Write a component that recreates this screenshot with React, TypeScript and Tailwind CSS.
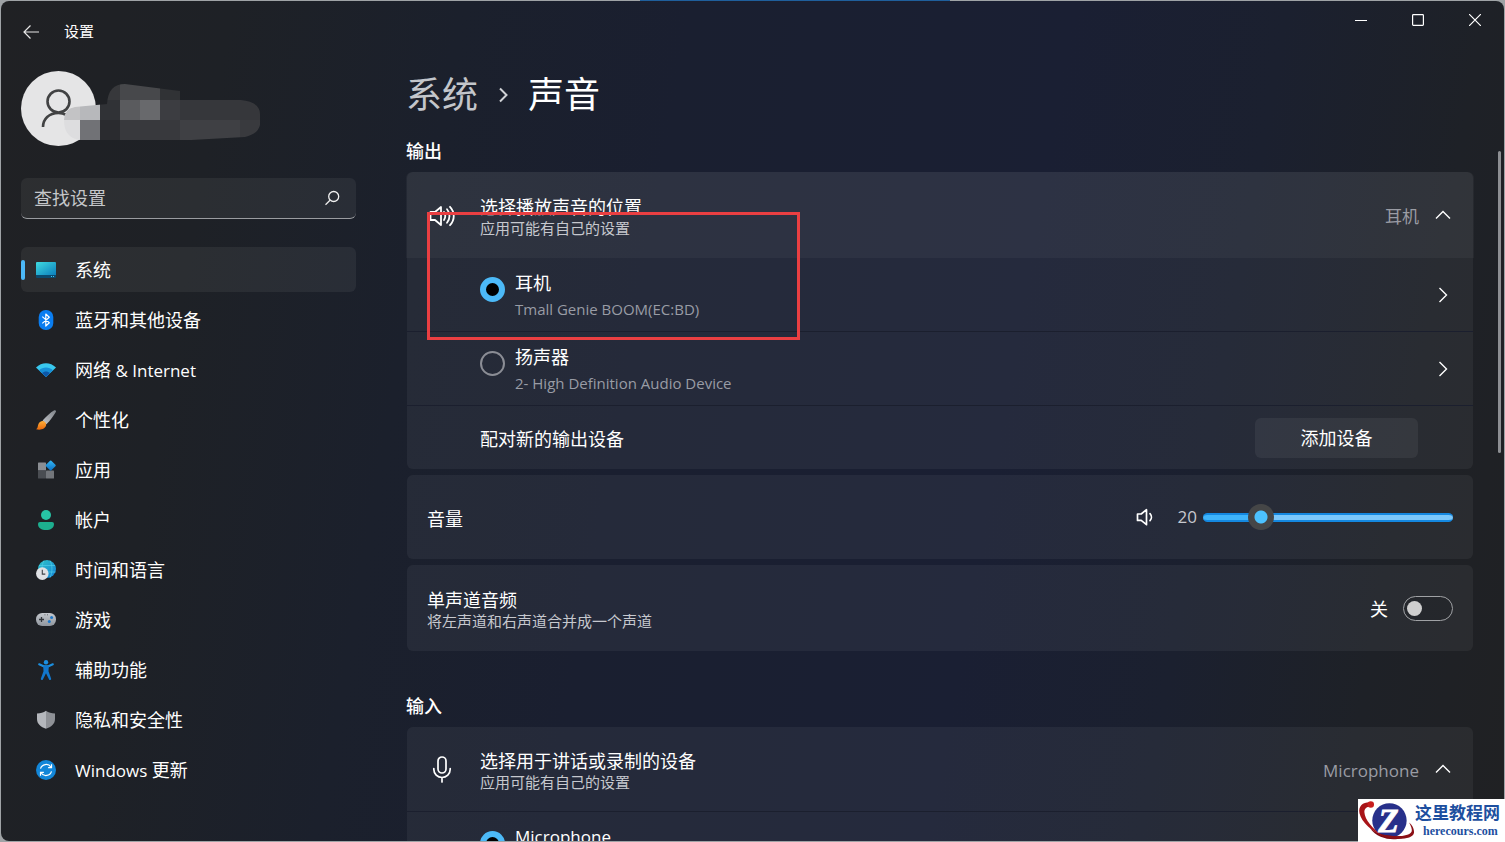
import { useState, type ReactNode } from 'react';

function SystemIcon() {
  return (
    <svg viewBox="0 0 20 20" className="size-5" aria-hidden="true">
      <defs>
        <linearGradient id="sys" x1="0" y1="0" x2="1" y2="1">
          <stop offset="0" stopColor="#3fdbe0" />
          <stop offset="1" stopColor="#0c7fbd" />
        </linearGradient>
      </defs>
      <path d="M1 2h18a1 1 0 0 1 1 1v12H0V3a1 1 0 0 1 1-1z" fill="url(#sys)" />
      <path d="M0 15h20v2a1 1 0 0 1-1 1H1a1 1 0 0 1-1-1z" fill="#0b4a6e" />
      <path d="M15 16.5h1M17 16.5h1" stroke="#43c6f2" strokeWidth="1" />
    </svg>
  );
}

function BluetoothIcon() {
  return (
    <svg viewBox="0 0 20 20" className="size-5" aria-hidden="true">
      <rect x="2.7" y="0" width="14.6" height="20" rx="7" fill="#0a7df0" />
      <path d="M6.3 6.6l7 6.2-3.5 3.2V4l3.5 3.2-7 6.2" fill="none" stroke="#fff" strokeWidth="1.2" strokeLinejoin="round" />
    </svg>
  );
}

function WifiIcon() {
  return (
    <svg viewBox="0 0 20 20" className="size-5" aria-hidden="true">
      <path d="M0 7.6C5.6 1.9 14.4 1.9 20 7.6L10 17z" fill="#39c8ee" />
      <path d="M3 10.3C7 6.6 13 6.6 17 10.3L10 17z" fill="#1790d8" />
      <path d="M6 13c2.3-2.1 5.7-2.1 8 0l-4 4z" fill="#0d57a8" />
    </svg>
  );
}

function BrushIcon() {
  return (
    <svg viewBox="0 0 20 20" className="size-5" aria-hidden="true">
      <defs>
        <linearGradient id="brh" x1="1" y1="0" x2="0" y2="1">
          <stop offset="0" stopColor="#7d8288" />
          <stop offset="1" stopColor="#c4c6ca" />
        </linearGradient>
        <linearGradient id="brt" x1="0" y1="0" x2="0" y2="1">
          <stop offset="0" stopColor="#ffb03a" />
          <stop offset="1" stopColor="#e8680c" />
        </linearGradient>
      </defs>
      <path d="M18.3.3c1.2-.6 2.2.5 1.5 1.7C17.6 6 14 10.800 10.400 14.200L6.600 10.600C9.800 6.800 14.200 2.700 18.300.3z" fill="url(#brh)" />
      <path d="M6.200 11c2.400-.2 4.400 2 3.900 4.300C9.400 18.600 5 20.600 0 19.200c1.800-.9 1.600-2.400 2.100-4.300C2.700 12.700 4.200 11.200 6.200 11z" fill="url(#brt)" />
    </svg>
  );
}

function AppsIcon() {
  return (
    <svg viewBox="0 0 20 20" className="size-5" aria-hidden="true">
      <defs>
        <linearGradient id="apd" x1="0" y1="0" x2="1" y2="1">
          <stop offset="0" stopColor="#35b8f5" />
          <stop offset="1" stopColor="#0a6fc2" />
        </linearGradient>
      </defs>
      <rect x="2" y="2.500" width="8" height="8.100" rx=".6" fill="#8b8e93" />
      <rect x="2" y="10.600" width="8" height="8" rx=".6" fill="#4a4d52" />
      <rect x="10" y="10.600" width="8" height="8" rx=".6" fill="#73767b" />
      <rect x="10.900" y="1.700" width="7.600" height="7.600" rx=".9" transform="rotate(45 14.700 5.500)" fill="url(#apd)" />
    </svg>
  );
}

function AccountIcon() {
  return (
    <svg viewBox="0 0 20 20" className="size-5" aria-hidden="true">
      <circle cx="10" cy="5" r="5" fill="#27c3a4" />
      <path d="M4 12h12a2 2 0 0 1 2 2c0 4-3.500 6-8 6s-8-2-8-6a2 2 0 0 1 2-2z" fill="#1dae8f" />
    </svg>
  );
}

function TimeIcon() {
  return (
    <svg viewBox="0 0 20 20" className="size-5" aria-hidden="true">
      <defs>
        <linearGradient id="glb" x1="0" y1="0" x2="1" y2="1">
          <stop offset="0" stopColor="#2fc4c8" />
          <stop offset="1" stopColor="#1480d6" />
        </linearGradient>
      </defs>
      <circle cx="11" cy="9" r="9" fill="url(#glb)" />
      <path d="M3 5.500h16M3 12h16.500M14 .6c2.600 5 2.600 12 0 17M8 .6C6.600 3 6 6 6 9" stroke="#4fcdea" strokeWidth=".7" fill="none" />
      <circle cx="6.300" cy="13.600" r="6.300" fill="#dfe1e4" />
      <path d="M6.300 9.800v4.300h3" stroke="#3f4348" strokeWidth="1.100" fill="none" />
    </svg>
  );
}

function GameIcon() {
  return (
    <svg viewBox="0 0 20 20" className="size-5" aria-hidden="true">
      <defs>
        <linearGradient id="gam" x1="0" y1="0" x2="0" y2="1">
          <stop offset="0" stopColor="#c5c9ce" />
          <stop offset="1" stopColor="#8f959d" />
        </linearGradient>
      </defs>
      <rect x="0" y="3" width="20" height="13" rx="6.200" fill="url(#gam)" />
      <path d="M5.500 7v5M3 9.500h5" stroke="#33373c" strokeWidth="1.300" />
      <circle cx="15.600" cy="7.600" r="1.500" fill="#1f78c8" />
      <circle cx="13.300" cy="11.500" r="1.500" fill="#1f78c8" />
      <path d="M8.500 4.800h.9M11 4.800h.9" stroke="#4a4e54" strokeWidth=".9" />
    </svg>
  );
}

function AccessIcon() {
  return (
    <svg viewBox="0 0 20 20" className="size-5" aria-hidden="true">
      <circle cx="10" cy="2.300" r="2.200" fill="#1b8fe0" />
      <path d="M3.200 4.300L8 6.400h4l4.800-2.100" fill="none" stroke="#1b8fe0" strokeWidth="2.200" strokeLinecap="round" />
      <path d="M7.200 6h5.600l-.3 5.300 2.600 7.300c.4 1.200-1.500 1.900-2 .8L10 13.300l-3.100 6.100c-.5 1.100-2.400.4-2-.8l2.600-7.300z" fill="#1277cc" />
    </svg>
  );
}

function ShieldIcon() {
  return (
    <svg viewBox="0 0 20 20" className="size-5" aria-hidden="true">
      <path d="M10 .8C12.500 2.800 15.500 3.500 19 3.500V9c0 5-3.800 8-9 9.800z" fill="#8e9196" />
      <path d="M10 .8C7.500 2.800 4.500 3.500 1 3.500V9c0 5 3.800 8 9 9.800z" fill="#b4b7bc" />
    </svg>
  );
}

function UpdateIcon() {
  return (
    <svg viewBox="0 0 20 20" className="size-5" aria-hidden="true">
      <circle cx="10" cy="10" r="10" fill="#1286d8" />
      <path d="M4.500 8.700A5.800 5.800 0 0 1 15 7.200M15.500 11.300A5.800 5.800 0 0 1 5 12.800" fill="none" stroke="#fff" strokeWidth="1.200" />
      <path d="M15.500 4.300v3.400h-3.400M4.500 15.700v-3.400h3.400" fill="none" stroke="#fff" strokeWidth="1.200" />
    </svg>
  );
}

function Latin({ children }: { children: ReactNode }) {
  return <span className="text-[17px]">{children}</span>;
}

const NAV: { id: string; label: ReactNode; icon: ReactNode; active?: boolean }[] = [
  { id: 'system', label: '系统', icon: <SystemIcon />, active: true },
  { id: 'devices', label: '蓝牙和其他设备', icon: <BluetoothIcon /> },
  { id: 'network', label: <>网络<Latin> &amp; Internet</Latin></>, icon: <WifiIcon /> },
  { id: 'personal', label: '个性化', icon: <BrushIcon /> },
  { id: 'apps', label: '应用', icon: <AppsIcon /> },
  { id: 'accounts', label: '帐户', icon: <AccountIcon /> },
  { id: 'time', label: '时间和语言', icon: <TimeIcon /> },
  { id: 'games', label: '游戏', icon: <GameIcon /> },
  { id: 'access', label: '辅助功能', icon: <AccessIcon /> },
  { id: 'privacy', label: '隐私和安全性', icon: <ShieldIcon /> },
  { id: 'update', label: <><Latin>Windows </Latin>更新</>, icon: <UpdateIcon /> },
];

function ChevronUp() {
  return (
    <svg viewBox="0 0 16 16" className="size-4 shrink-0" fill="none" stroke="#fff" strokeWidth="1.4" aria-hidden="true">
      <path d="M1 11.500l7-7 7 7" />
    </svg>
  );
}

function ChevronRight() {
  return (
    <svg viewBox="0 0 16 16" className="size-4 shrink-0" fill="none" stroke="#fff" strokeWidth="1.4" aria-hidden="true">
      <path d="M4.500 1l7 7-7 7" />
    </svg>
  );
}

/* Avatar with the account name hidden behind a mosaic */
function Profile() {
  return (
    <svg viewBox="0 0 240 76" className="h-[76px] w-[240px] shrink-0" role="img" aria-label="帐户头像">
      <defs>
        <clipPath id="mosaic">
          <path d="M43 49Q43 38 54 36L86 33Q87 13 104 13L159 20V29H220Q239 31 239 43V54Q237 63 224 66L170 69H59Q43 67 43 49Z" />
        </clipPath>
      </defs>
      <circle cx="37.500" cy="37.500" r="37.500" fill="#e5e5e6" />
      <circle cx="37.500" cy="30.500" r="11" fill="none" stroke="#414243" strokeWidth="2.600" />
      <path d="M22 56c0-8 6-14 15.500-14 3 0 5 .5 8 2" fill="none" stroke="#414243" strokeWidth="2.600" />
      <g clipPath="url(#mosaic)" shapeRendering="crispEdges">
        <rect x="79" y="9" width="20" height="20" fill="#37383b" />
        <rect x="99" y="9" width="40" height="20" fill="#47484b" />
        <rect x="139" y="9" width="20" height="20" fill="#303235" />
        <rect x="39" y="29" width="20" height="20" fill="#c3c3c5" />
        <rect x="59" y="29" width="20" height="20" fill="#b7b8bb" />
        <rect x="79" y="29" width="20" height="20" fill="#303236" />
        <rect x="99" y="29" width="20" height="20" fill="#5a5b5e" />
        <rect x="119" y="29" width="20" height="20" fill="#68696c" />
        <rect x="139" y="29" width="20" height="20" fill="#3c3d41" />
        <rect x="159" y="29" width="80" height="20" fill="#36373b" />
        <rect x="39" y="49" width="20" height="20" fill="#dddddf" />
        <rect x="59" y="49" width="20" height="20" fill="#717276" />
        <rect x="79" y="49" width="20" height="20" fill="#2a2b2f" />
        <rect x="99" y="49" width="60" height="20" fill="#38393d" />
        <rect x="159" y="49" width="60" height="20" fill="#3f4044" />
        <rect x="219" y="49" width="20" height="20" fill="#393a3e" />
      </g>
    </svg>
  );
}

function DeviceRow(props: { group: string; name: ReactNode; detail?: string; checked: boolean; onSelect: () => void }) {
  return (
    <div className="flex h-[74px] items-center border-b border-[#1b1f2e] pr-[22px] pl-[73px]">
      <label className="flex flex-1 items-center gap-[10px] pt-0.5">
        <input
          type="radio"
          name={props.group}
          checked={props.checked}
          onChange={props.onSelect}
          className="mb-3 size-[25px] shrink-0 appearance-none rounded-full border-2 border-[#8b8d95] checked:border-[6px] checked:border-[#4cb9f7] checked:bg-black"
        />
        <span className="flex flex-col gap-[2px]">
          <span className="text-lg leading-6 text-white">{props.name}</span>
          <span className="h-6 text-[15px] leading-6 text-[#999ca5]">{props.detail}</span>
        </span>
      </label>
      <button type="button" aria-label="设备属性">
        <ChevronRight />
      </button>
    </div>
  );
}

function ExpanderHeader(props: { icon: ReactNode; title: string; value: string; hovered?: boolean }) {
  return (
    <button
      type="button"
      aria-expanded="true"
      className={
        props.hovered
          ? '-mx-px flex h-[86px] w-[calc(100%+2px)] items-center rounded-t-md bg-white/[0.04] pr-[23px] pl-[22px] text-left'
          : 'flex h-[85px] w-full items-center border-b border-[#1b1f2e] pr-[22px] pl-[21px] text-left'
      }
    >
      <span className="flex w-[52px] shrink-0">{props.icon}</span>
      <span className="flex flex-1 flex-col pt-1">
        <span className="text-lg leading-[22px] text-white">{props.title}</span>
        <span className="text-[15px] leading-5 text-[#c6c8ce]">应用可能有自己的设置</span>
      </span>
      <span className="mr-4 pt-1 text-[17px] leading-6 text-[#9a9ca4]">{props.value}</span>
      <ChevronUp />
    </button>
  );
}

function Watermark() {
  return (
    <div className="absolute right-0 bottom-0 flex h-[43px] w-[147px] items-center bg-white">
      <svg viewBox="0 0 58 43" className="h-[43px] w-[57px] shrink-0" aria-hidden="true">
        <circle cx="32" cy="21.500" r="17.500" fill="#27308a" />
        <path d="M12 29C18 35 30 39 50 37 44 42 22 44 12 29z" fill="#7d0c14" />
        <path d="M14 3C6 2 0 6 1.500 14c2 9 13 19 25 23.500C14 30 7 20 6.500 13 6.300 9 9 7 14 7.500z" fill="#a81418" />
        <path d="M26 37.500c10 4 30 4 31-3.500.4-4-2-8-5-10.500 2 4 3.500 7 2.500 9.500C52 38 38 38.500 26 36z" fill="#8b1016" />
        <circle cx="13" cy="5.300" r="3.300" fill="#c81e1e" />
        <text x="31" y="33.500" textAnchor="middle" fontFamily="Liberation Serif, serif" fontWeight="bold" fontStyle="italic" fontSize="34" fill="#fff" stroke="#fff" strokeWidth=".8">
          Z
        </text>
      </svg>
      <div className="flex flex-col">
        <span className="text-[17px] leading-5 font-bold text-[#1d4f9f]">这里教程网</span>
        <span className="pl-2 font-['Liberation_Serif',serif] text-xs leading-4 font-bold text-[#1d4f9f]">herecours.com</span>
      </div>
    </div>
  );
}

export default function App() {
  const [output, setOutput] = useState(0);
  const [volume, setVolume] = useState(20);
  const [mono, setMono] = useState(false);

  return (
    <div className="relative h-screen overflow-hidden bg-[#9fa3a6] bg-[linear-gradient(90deg,#9fa3a6_640px,#1f5f9c_640px,#1f5f9c_950px,#9fa3a6_950px)] bg-[length:100%_50%] bg-no-repeat p-px font-['Open_Sans','Noto_Sans_CJK_SC',sans-serif]">
      <div className="relative flex h-full overflow-hidden rounded-lg bg-[linear-gradient(100deg,#202124_0%,#1e2126_14%,#1b202c_28%,#1a1f30_42%,#1a1f33_65%,#1b202f_78%,#1e2127_90%,#202123_100%)]">
        <aside className="flex w-[355px] shrink-0 flex-col pl-5">
          <header className="flex h-[70px] items-start gap-[23px] pt-[18px]">
            <button type="button" aria-label="返回" className="flex h-6 items-center">
              <svg viewBox="0 0 20 20" className="size-5" fill="none" stroke="#e6e6e6" strokeWidth="1.200" aria-hidden="true">
                <path d="M18 11H3M9.500 4.500L3 11 9.500 17.500" />
              </svg>
            </button>
            <span className="text-[15px] leading-6 text-white">设置</span>
          </header>
          <Profile />
          <label className="mt-[31px] flex h-[41px] shrink-0 items-center rounded-md border-b border-[#9a9ca0] bg-white/[0.06] pr-4 pl-[13px]">
            <input
              type="text"
              aria-label="查找设置"
              placeholder="查找设置"
              className="min-w-0 flex-1 bg-transparent text-lg leading-6 text-white outline-none placeholder:text-[#c5c7ca]"
            />
            <svg viewBox="0 0 16 16" className="size-4" fill="none" stroke="#f0f0f0" strokeWidth="1.300" aria-hidden="true">
              <circle cx="9.700" cy="6.500" r="5" />
              <path d="M6 10.200L1.500 14.700" />
            </svg>
          </label>
          <nav className="mt-7 flex flex-col gap-[5px]">
            {NAV.map((item) => (
              <a
                key={item.id}
                href={'#' + item.id}
                aria-current={item.active ? 'page' : undefined}
                className={item.active ? 'flex h-[45px] items-center rounded-md bg-white/[0.06]' : 'flex h-[45px] items-center rounded-md'}
              >
                <span className={item.active ? 'h-5 w-1 rounded-full bg-[#4cb9f7]' : 'h-5 w-1'} />
                <span className="ml-[11px]">{item.icon}</span>
                <span className="ml-[19px] pt-px text-lg leading-6 whitespace-pre text-white">{item.label}</span>
              </a>
            ))}
          </nav>
        </aside>

        <main className="ml-[50px] flex min-w-0 flex-1 flex-col pt-[66px]">
          <h1 className="flex h-[56px] shrink-0 items-center text-4xl">
            <a href="#system" className="text-[#c3c6cb]">
              系统
            </a>
            <svg viewBox="0 0 16 16" className="mx-[17px] size-4" fill="none" stroke="#d0d2d6" strokeWidth="2" aria-hidden="true">
              <path d="M5 1.500L11.500 8 5 14.500" />
            </svg>
            <span className="text-white">声音</span>
          </h1>

          <h2 className="mt-4 text-lg leading-6 font-medium text-white">输出</h2>
          <section className="relative mt-[9px] ml-px shrink-0 rounded-md bg-white/[0.05]">
            <ExpanderHeader
              hovered
              icon={
                <svg viewBox="0 0 28 26" className="h-[26px] w-7" fill="none" stroke="#fff" strokeWidth="1.800" aria-hidden="true">
                  <path d="M2.500 10h4.500l6-5v18l-6-5H2.500z" strokeLinejoin="round" />
                  <path d="M16 10c1.600 2.500 1.600 5.500 0 8M19 7.300c3.300 4 3.300 9.400 0 13.400M22 4.800c5 5.300 5 13.100 0 18.400" strokeLinecap="round" />
                </svg>
              }
              title="选择播放声音的位置"
              value="耳机"
            />
            <DeviceRow group="output" name="耳机" detail="Tmall Genie BOOM(EC:BD)" checked={output === 0} onSelect={() => setOutput(0)} />
            <DeviceRow group="output" name="扬声器" detail="2- High Definition Audio Device" checked={output === 1} onSelect={() => setOutput(1)} />
            <div className="flex h-[63px] items-center justify-between pr-[55px] pl-[73px]">
              <span className="pt-0.5 text-lg leading-6 text-white">配对新的输出设备</span>
              <button type="button" className="h-10 w-[163px] rounded-md bg-white/[0.06] text-lg leading-6 text-white">
                添加设备
              </button>
            </div>
            <div className="pointer-events-none absolute top-10 left-5 h-32 w-[373px] border-[3px] border-[#ea3f42]" />
          </section>

          <section className="mt-1.5 ml-px flex h-[84px] shrink-0 items-center rounded-md bg-white/[0.05] px-5">
            <label htmlFor="volume" className="flex-1 pt-1 text-lg leading-6 text-white">
              音量
            </label>
            <svg viewBox="0 0 20 20" className="size-5" fill="none" stroke="#fff" strokeWidth="1.700" aria-hidden="true">
              <path d="M1.500 7h3.700l5.300-4.300v15l-5.300-4.300H1.500z" strokeLinejoin="round" />
              <path d="M14 6.700c1.900 2 1.900 5 0 7" strokeLinecap="round" />
            </svg>
            <span className="mr-1.5 ml-[22px] text-[17px] leading-6 text-[#c6c8ce]">{volume}</span>
            <input
              id="volume"
              type="range"
              min={0}
              max={100}
              value={volume}
              onChange={(e) => setVolume(Number(e.target.value))}
              className="h-7 w-[250px] appearance-none bg-transparent [&::-webkit-slider-runnable-track]:h-[9px] [&::-webkit-slider-runnable-track]:rounded-full [&::-webkit-slider-runnable-track]:border-y-2 [&::-webkit-slider-runnable-track]:border-[#1488e0] [&::-webkit-slider-runnable-track]:bg-[linear-gradient(90deg,#3fb4fa_22%,#7cc8fb_22%)] [&::-webkit-slider-thumb]:-mt-[11px] [&::-webkit-slider-thumb]:size-[26px] [&::-webkit-slider-thumb]:appearance-none [&::-webkit-slider-thumb]:rounded-full [&::-webkit-slider-thumb]:bg-[radial-gradient(circle,#4cc2ff_6px,#454647_7px)]"
            />
          </section>

          <section className="mt-1.5 ml-px flex h-[86px] shrink-0 items-center rounded-md bg-white/[0.05] px-5">
            <label htmlFor="mono" className="flex flex-1 flex-col pt-1">
              <span className="text-lg leading-[22px] text-white">单声道音频</span>
              <span className="text-[15px] leading-5 text-[#c6c8ce]">将左声道和右声道合并成一个声道</span>
            </label>
            <span className="mr-[15px] pt-0.5 text-lg leading-6 text-white">{mono ? '开' : '关'}</span>
            <input
              id="mono"
              type="checkbox"
              role="switch"
              checked={mono}
              onChange={(e) => setMono(e.target.checked)}
              className="flex h-[25px] w-[50px] appearance-none items-center rounded-full border border-[#a0a2a5] bg-black/10 px-[3px] before:size-[15px] before:rounded-full before:bg-[#cfcfcf] before:content-[''] checked:justify-end checked:bg-[#4cc2ff] checked:before:bg-black"
            />
          </section>

          <h2 className="mt-[43px] text-lg leading-6 font-medium text-white">输入</h2>
          <section className="mt-[9px] ml-px shrink-0 rounded-md bg-white/[0.05]">
            <ExpanderHeader
              icon={
                <svg viewBox="0 0 30 28" className="h-7 w-[30px]" fill="none" stroke="#fff" strokeWidth="1.700" aria-hidden="true">
                  <rect x="10" y="2" width="8" height="16" rx="4" />
                  <path d="M5.800 13.500v.8a8.200 8.200 0 0 0 16.400 0v-.8M14 22.500V27" strokeLinecap="round" />
                </svg>
              }
              title="选择用于讲话或录制的设备"
              value="Microphone"
            />
            <DeviceRow group="input" name={<Latin>Microphone</Latin>} checked onSelect={() => undefined} />
          </section>
        </main>

        <div className="flex w-[31px] shrink-0 flex-col items-end pt-[150px] pr-[3px]">
          <div className="h-[302px] w-[3px] rounded-full bg-[#8d8f93]" />
        </div>

        <div className="absolute top-0 right-px flex h-[38px] items-center">
          <button type="button" aria-label="最小化" className="flex h-full w-[57px] items-center justify-center">
            <svg viewBox="0 0 12 12" className="size-3" stroke="#fff" aria-hidden="true">
              <path d="M0 6.500h12" />
            </svg>
          </button>
          <button type="button" aria-label="最大化" className="flex h-full w-[57px] items-center justify-center">
            <svg viewBox="0 0 12 12" className="size-3" fill="none" stroke="#fff" strokeWidth="1.200" aria-hidden="true">
              <rect x=".6" y=".6" width="10.800" height="10.800" rx=".8" />
            </svg>
          </button>
          <button type="button" aria-label="关闭" className="flex h-full w-[57px] items-center justify-center">
            <svg viewBox="0 0 12 12" className="size-3" stroke="#fff" strokeWidth="1.200" aria-hidden="true">
              <path d="M0 0l12 12M12 0L0 12" />
            </svg>
          </button>
        </div>
      </div>
      <Watermark />
    </div>
  );
}
